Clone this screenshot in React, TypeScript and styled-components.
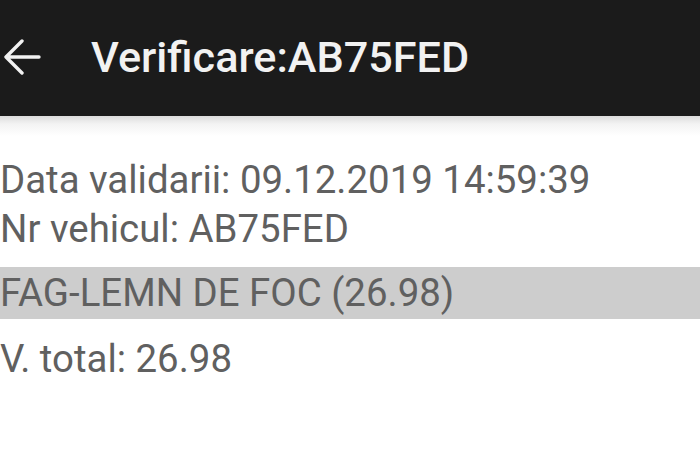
import React from "react";
import styled, { createGlobalStyle } from "styled-components";

const rows = [
  { id: "r1", text: "Data validarii: 09.12.2019 14:59:39" },
  { id: "r2", text: "Nr vehicul: AB75FED" },
  { id: "r3", text: "FAG-LEMN DE FOC (26.98)", highlight: true },
  { id: "r4", text: "V. total: 26.98" },
];

const App = () => {
  return (
    <>
      <GlobalStyle />
      <Screen>
        <Toolbar>
          <BackButton aria-label="inapoi">
            <svg width="37" height="36" viewBox="0 0 37 36" fill="none">
              <path
                d="M35 18H3M18 2L2 18l16 16"
                stroke="#f2f2f2"
                strokeWidth="3.4"
                strokeLinecap="round"
                strokeLinejoin="round"
              />
            </svg>
          </BackButton>
          <Title>Verificare:AB75FED</Title>
        </Toolbar>
        <Shadow />
        <Details>
          {rows.map((row) => (
            <Line key={row.id} $highlight={row.highlight}>
              {row.text}
            </Line>
          ))}
        </Details>
      </Screen>
    </>
  );
};

const GlobalStyle = createGlobalStyle`
  html, body {
    margin: 0;
    padding: 0;
    background: #ffffff;
  }
  body {
    font-family: Roboto, "Liberation Sans", sans-serif;
  }
`;

const Screen = styled.div`
  width: 700px;
  height: 453px;
  overflow: hidden;
  background: #ffffff;
  display: flex;
  flex-direction: column;
`;

const Toolbar = styled.div`
  height: 116px;
  background: #1b1b1b;
  display: flex;
  align-items: center;
  padding-left: 4px;
  box-sizing: border-box;
`;

const BackButton = styled.div`
  width: 87px;
  display: flex;
  align-items: center;
  margin-top: -2px;
`;

const Title = styled.h1`
  margin: 0;
  color: #f2f2f2;
  font-size: 43.2px;
  font-weight: 500;
  margin-top: -1px;
`;

const Shadow = styled.div`
  height: 20px;
  background: linear-gradient(#dcdcdc, #f3f3f3 40%, #ffffff);
`;

const Details = styled.div`
  display: flex;
  flex-direction: column;
  padding-top: 19px;
`;

const Line = styled.div<{ $highlight?: boolean }>`
  font-size: 38.4px;
  color: #606060;
  line-height: ${(p) => (p.$highlight ? "52px" : "49px")};
  white-space: nowrap;
  background: ${(p) => (p.$highlight ? "#cdcdcd" : "transparent")};
  margin: ${(p) => (p.$highlight ? "14px 0" : "0")};

  &:last-child {
    line-height: 52px;
  }
`;

export default App;
